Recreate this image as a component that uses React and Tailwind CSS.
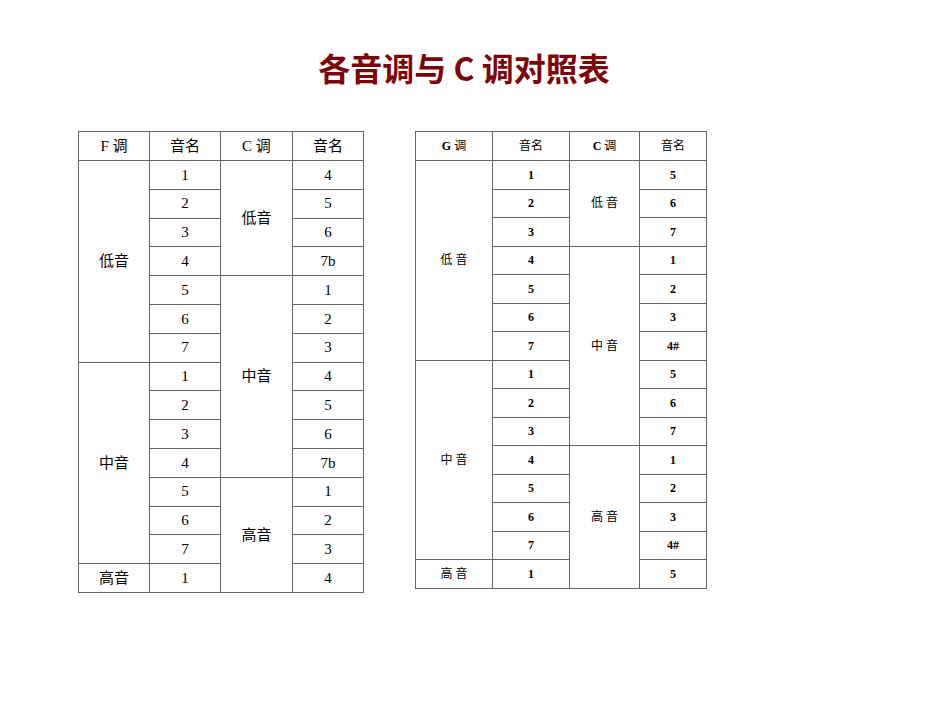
import React from "react";

const spanCls = { 1: "", 3: "row-span-3", 4: "row-span-4", 5: "row-span-5", 7: "row-span-7" };

function Cell({ children, span = 1, cls = "" }) {
  return (
    <div className={`flex items-center justify-center border-r border-b border-[#666] ${spanCls[span]} ${cls}`}>
      {children}
    </div>
  );
}

function RText({ t }) {
  const parts = t.split(/([A-Z0-9#]+)/).filter(Boolean);
  return (
    <span>
      {parts.map((p, i) =>
        /[A-Z0-9#]/.test(p) ? (
          <span key={i} className="font-bold">{p}</span>
        ) : (
          <span key={i} className="font-normal">{p}</span>
        )
      )}
    </span>
  );
}

const leftRows = [
  [["F 调"], ["音名"], ["C 调"], ["音名"]],
  [["低音", 7], ["1"], ["低音", 4], ["4"]],
  [["2"], ["5"]],
  [["3"], ["6"]],
  [["4"], ["7b"]],
  [["5"], ["中音", 7], ["1"]],
  [["6"], ["2"]],
  [["7"], ["3"]],
  [["中音", 7], ["1"], ["4"]],
  [["2"], ["5"]],
  [["3"], ["6"]],
  [["4"], ["7b"]],
  [["5"], ["高音", 4], ["1"]],
  [["6"], ["2"]],
  [["7"], ["3"]],
  [["高音"], ["1"], ["4"]],
];

const rightRows = [
  [["G 调"], ["音名"], ["C 调"], ["音名"]],
  [["低 音", 7], ["1"], ["低 音", 3], ["5"]],
  [["2"], ["6"]],
  [["3"], ["7"]],
  [["4"], ["中 音", 7], ["1"]],
  [["5"], ["2"]],
  [["6"], ["3"]],
  [["7"], ["4#"]],
  [["中 音", 7], ["1"], ["5"]],
  [["2"], ["6"]],
  [["3"], ["7"]],
  [["4"], ["高 音", 5], ["1"]],
  [["5"], ["2"]],
  [["6"], ["3"]],
  [["7"], ["4#"]],
  [["高 音"], ["1"], ["5"]],
];

export default function App() {
  return (
    <div className="w-[950px] h-[713px] bg-white">
      <div
        className="w-[928px] pt-[46px] h-[131px] text-center text-[32px] font-bold text-[#7a0808] leading-[42px]"
        style={{ fontFamily: '"Noto Sans CJK SC", sans-serif' }}
      >
        各音调与 C 调对照表
      </div>
      <div className="flex pl-[78px] gap-[51px] items-start">
        <div
          className="grid grid-cols-[71px_71px_72px_71px] grid-rows-[29px_repeat(15,28.8px)] border-t border-l border-[#666] text-[15px] text-black"
          style={{ fontFamily: '"Liberation Serif", "Noto Sans CJK SC", serif' }}
        >
          {leftRows.flat().map((c, i) => (
            <Cell key={i} span={c[1] || 1}>
              {c[0]}
            </Cell>
          ))}
        </div>
        <div
          className="grid grid-cols-[77px_77px_70px_67px] grid-rows-[29px_repeat(15,28.53px)] border-t border-l border-[#666] text-[12px] text-black"
          style={{ fontFamily: '"Liberation Serif", "Noto Sans CJK SC", serif' }}
        >
          {rightRows.flat().map((c, i) => (
            <Cell key={i} span={c[1] || 1}>
              <RText t={c[0]} />
            </Cell>
          ))}
        </div>
      </div>
    </div>
  );
}
